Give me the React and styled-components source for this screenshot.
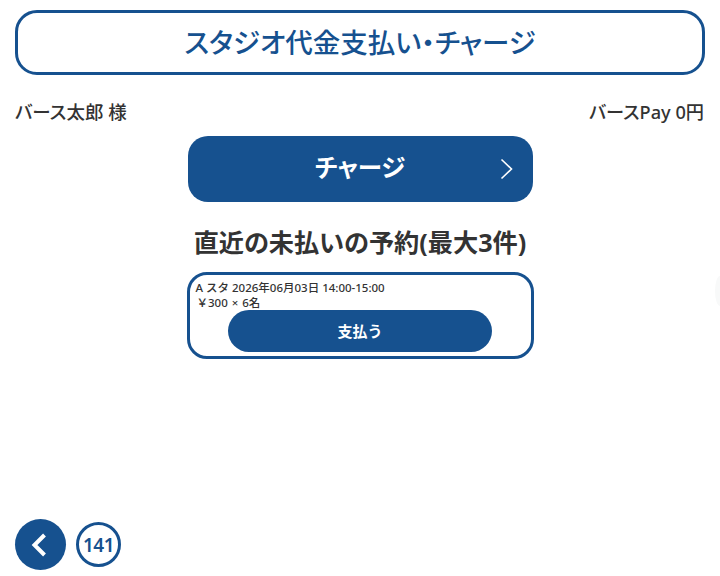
import React from "react";
import styled, { createGlobalStyle } from "styled-components";

const BLUE = "#16518f";
const INK = "#333333";

const GlobalStyle = createGlobalStyle`
    html, body {
        margin: 0;
        padding: 0;
        background: #ffffff;
    }
    body {
        font-family: "Noto Sans", "Noto Sans CJK JP", sans-serif;
        color: ${INK};
    }
`;

const Page = styled.div`
    position: relative;
    box-sizing: border-box;
    height: 576px;
    padding: 10px 15px 6px;
    display: flex;
    flex-direction: column;
    overflow: hidden;
`;

const TitleBox = styled.h1`
    box-sizing: border-box;
    height: 65px;
    margin: 0;
    padding-bottom: 3px;
    border: 3px solid ${BLUE};
    border-radius: 22px;
    display: flex;
    align-items: center;
    justify-content: center;
    color: ${BLUE};
    font-size: 27.5px;
    font-weight: 500;
    font-feature-settings: "palt";
`;

const InfoRow = styled.div`
    display: flex;
    justify-content: space-between;
    align-items: center;
    height: 24px;
    margin-top: 24px;
    padding-right: 1px;
    font-size: 18.5px;
    font-weight: 500;
    font-feature-settings: "palt";
`;

const Balance = styled.span`
    font-size: 18.2px;
`;

const Center = styled.div`
    width: 345px;
    margin: 13px auto 0;
    display: flex;
    flex-direction: column;
    align-items: stretch;
`;

const ChargeButton = styled.button`
    position: relative;
    height: 66px;
    border: 0;
    padding: 0 0 5px;
    border-radius: 20px;
    background: ${BLUE};
    color: #ffffff;
    font: inherit;
    font-size: 24.5px;
    font-weight: 700;
    font-feature-settings: "palt";
`;

const ChargeArrow = styled.svg`
    position: absolute;
    right: 20px;
    top: 22px;
    width: 13px;
    height: 22px;
`;

const SectionTitle = styled.h2`
    margin: 22px 0 0;
    height: 36px;
    line-height: 36px;
    text-align: center;
    white-space: nowrap;
    font-size: 25.2px;
    font-weight: 700;
    font-feature-settings: "palt";
`;

const ReserveCard = styled.div`
    box-sizing: border-box;
    height: 87px;
    margin: 12px -1px 0;
    padding: 5px 6px 0;
    border: 3px solid ${BLUE};
    border-radius: 20px;
    display: flex;
    flex-direction: column;
`;

const ReserveLine = styled.div`
    height: 15px;
    line-height: 15px;
    font-size: 11.5px;
    font-weight: 500;
    white-space: nowrap;
    padding-left: ${(props) => (props.$indent ? "1px" : "0")};
    word-spacing: ${(props) => (props.$indent ? "1px" : "0")};
`;

const PayButton = styled.button`
    align-self: center;
    width: 264px;
    height: 42px;
    border: 0;
    padding: 0 0 2px;
    border-radius: 21px;
    background: ${BLUE};
    color: #ffffff;
    font: inherit;
    font-size: 15px;
    font-weight: 700;
`;

const Footer = styled.div`
    margin-top: auto;
    display: flex;
    align-items: center;
    gap: 10px;
`;

const BackButton = styled.button`
    width: 51px;
    height: 51px;
    border: 0;
    padding: 0 4px 0 0;
    border-radius: 50%;
    background: ${BLUE};
    display: flex;
    align-items: center;
    justify-content: center;
`;

const PageBadge = styled.div`
    box-sizing: border-box;
    width: 45px;
    height: 45px;
    border: 3px solid ${BLUE};
    border-radius: 50%;
    display: flex;
    align-items: center;
    justify-content: center;
    color: ${BLUE};
    font-size: 19px;
    font-weight: 600;
    letter-spacing: -0.5px;
`;

const EdgeHandle = styled.div`
    position: absolute;
    right: -5px;
    top: 276px;
    width: 10px;
    height: 30px;
    border-radius: 50%;
    background: #f8f9f9;
`;

export default function App() {
    return (
        <Page>
            <GlobalStyle />
            <TitleBox>スタジオ代金支払い・チャージ</TitleBox>
            <InfoRow>
                <span>バース太郎 様</span>
                <Balance>バースPay 0円</Balance>
            </InfoRow>
            <Center>
                <ChargeButton>
                    チャージ
                    <ChargeArrow viewBox="0 0 13 22" fill="none">
                        <path d="M1.5 1.5 L11.5 11 L1.5 20.5" stroke="#ffffff" strokeWidth="1.6" />
                    </ChargeArrow>
                </ChargeButton>
                <SectionTitle>直近の未払いの予約(最大3件)</SectionTitle>
                <ReserveCard>
                    <ReserveLine>A スタ 2026年06月03日 14:00-15:00</ReserveLine>
                    <ReserveLine $indent>￥300 × 6名</ReserveLine>
                    <PayButton>支払う</PayButton>
                </ReserveCard>
            </Center>
            <Footer>
                <BackButton aria-label="戻る">
                    <svg width="16" height="24" viewBox="0 0 16 24" fill="none">
                        <path d="M13.5 2 L3.5 12 L13.5 22" stroke="#ffffff" strokeWidth="4" />
                    </svg>
                </BackButton>
                <PageBadge>141</PageBadge>
            </Footer>
            <EdgeHandle />
        </Page>
    );
}
